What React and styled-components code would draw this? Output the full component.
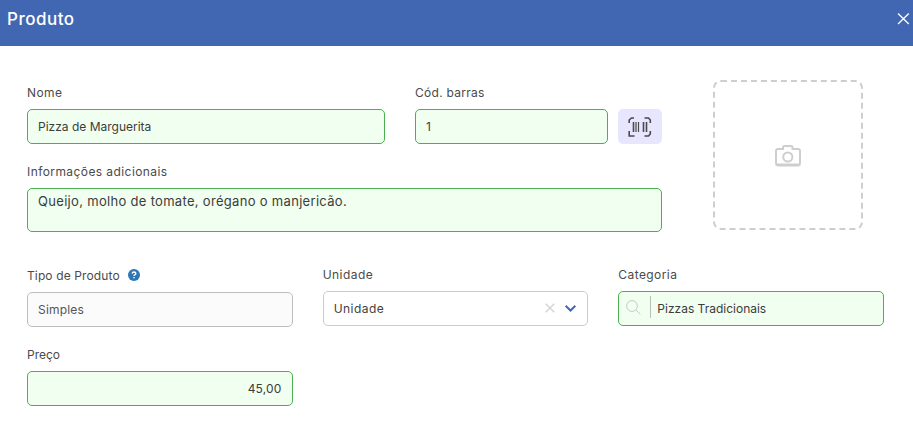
import styled, { createGlobalStyle, css } from "styled-components";

const GlobalStyle = createGlobalStyle`
  * {
    box-sizing: border-box;
  }

  body {
    margin: 0;
    color: #414141;
    background-color: #fff;
    font-family: "Inter", "Liberation Sans", sans-serif;
    font-size: 12px;
  }
`;

const Header = styled.header`
  height: 46px;
  padding: 0 3px 9px 7px;
  display: flex;
  align-items: center;
  justify-content: space-between;
  color: #fff;
  background-color: #4267b2;
`;

const Title = styled.h1`
  margin: 0;
  font-size: 17px;
  font-weight: 500;
  line-height: 24px;
  letter-spacing: 0.5px;
`;

const CloseButton = styled.button`
  width: 13px;
  height: 13px;
  padding: 0;
  display: flex;
  border: 0;
  color: #fff;
  background: none;
`;

const Form = styled.form`
  padding: 34px 29px 0 27px;
`;

const Top = styled.div`
  display: flex;
  gap: 51px;
`;

const MainFields = styled.div`
  width: 635px;
  padding-top: 3px;
`;

const NameRow = styled.div`
  display: grid;
  grid-template-columns: 358px 193px 44px;
  align-items: end;
  margin-bottom: 18px;
`;

const Field = styled.div`
  padding-top: ${(props) => props.$offset || 0}px;
`;

const BarcodeField = styled(Field)`
  margin-left: 30px;
  margin-right: -30px;
`;

const Label = styled.label`
  height: 18px;
  margin-bottom: 8px;
  display: flex;
  align-items: center;
  gap: 8px;
  color: #4a4a4a;
  white-space: nowrap;
  letter-spacing: ${(props) => props.$spacing || 0}px;
`;

const control = css`
  width: 100%;
  display: block;
  border: 1px solid #4caf50;
  border-radius: 5px;
  outline: 0;
  color: #3c3c3c;
  background-color: #f0fff0;
  font-family: inherit;
  letter-spacing: ${(props) => props.$spacing || 0}px;
`;

const Input = styled.input`
  ${control}
  height: 35px;
  padding: 0 10px 1px;
  font-size: 12px;
  text-align: ${(props) => props.$align || "left"};

  &:disabled {
    color: #555;
    border-color: #bdbdbd;
    background-color: #fbfbfb;
  }
`;

const TextArea = styled.textarea`
  ${control}
  height: 44px;
  padding: 2px 10px;
  font-size: 13px;
  line-height: 20px;
  resize: none;
  overflow: hidden;
`;

const BarcodeButton = styled.button`
  width: 44px;
  height: 35px;
  margin-left: 40px;
  padding: 0;
  display: flex;
  align-items: center;
  justify-content: center;
  border: 0;
  border-radius: 5px;
  color: #4a4a4a;
  background-color: #e6e6ff;
`;

const Photo = styled.div`
  width: 150px;
  height: 150px;
  padding-top: 2px;
  display: flex;
  align-items: center;
  justify-content: center;
  border: 2px dashed #cecece;
  border-radius: 8px;
  color: #cecece;
`;

const Details = styled.div`
  margin-top: 33px;
  display: grid;
  grid-template-columns: repeat(3, 1fr);
  column-gap: 30px;
  row-gap: 18px;
`;

const Select = styled.div`
  height: 35px;
  padding: 0 11px 1px 10px;
  display: flex;
  align-items: center;
  border: 1px solid #ccc;
  border-radius: 5px;
  letter-spacing: ${(props) => props.$spacing || 0}px;
`;

const SelectValue = styled.span`
  flex: 1;
`;

const SelectIcons = styled.div`
  display: flex;
  align-items: center;
  gap: 10px;
`;

const SearchBox = styled.div`
  ${control}
  height: 35px;
  padding-left: 7px;
  display: flex;
  align-items: center;
`;

const SearchDivider = styled.span`
  width: 1px;
  height: 22px;
  margin: 0 6px 3px 9px;
  background-color: #bdbdbd;
`;

const CloseIcon = () => (
  <svg width="13" height="13" viewBox="0 0 13 13" stroke="currentColor" strokeWidth="1.3">
    <path d="M1 1.5 11.8 12M11.8 1.5 1 12" />
  </svg>
);

const BarcodeIcon = () => (
  <svg width="24" height="22" viewBox="0 0 24 22" fill="none" stroke="currentColor">
    <path
      d="M6 2H3.5L1.2 4V7M16.5 2H20.5L22.3 4V7M1.2 15V20H6.5M16.5 20H20.5L22.3 18V15"
      strokeWidth="1.6"
    />
    <path d="M5.5 6V16M15.5 6V16M18.5 6V16" strokeWidth="1.6" />
    <path d="M8 6V16M10.5 6V16" strokeWidth="1.2" />
  </svg>
);

const CameraIcon = () => (
  <svg width="26" height="22" viewBox="0 0 26 22" fill="none" stroke="currentColor" strokeWidth="2">
    <path d="M3 4H8V2.5Q8 1 9.5 1H16Q17.5 1 17.5 2.5V4H23Q25 4 25 6V18Q25 20.5 22.5 20.5H3.5Q1 20.5 1 18V6Q1 4 3 4Z" />
    <path d="M2 19.5H24" />
    <circle cx="12.8" cy="12" r="4.6" />
  </svg>
);

const HelpIcon = () => (
  <svg width="12" height="12" viewBox="0 0 12 12" fill="none">
    <circle cx="6" cy="6" r="6" fill="#2e75b6" />
    <path d="M4.2 4.6Q4.3 3 6 3 7.8 3 7.8 4.4 7.8 5.3 6.7 5.8 6 6.1 6 7" stroke="#fff" strokeWidth="1.4" />
    <path d="M5.3 8H6.7V9.3H5.3Z" fill="#fff" />
  </svg>
);

const ClearIcon = () => (
  <svg width="10" height="10" viewBox="0 0 10 10" stroke="#d2d2d2" strokeWidth="1.3">
    <path d="M.7.7 9.3 9.3M9.3.7.7 9.3" />
  </svg>
);

const ChevronIcon = () => (
  <svg width="11" height="7" viewBox="0 0 11 7" fill="none" stroke="#4267b2" strokeWidth="2">
    <path d="M.6.8 5.5 5.5 10.4.8" />
  </svg>
);

const SearchIcon = () => (
  <svg width="15" height="17" viewBox="0 0 15 17" fill="none" stroke="#c8c8c8">
    <circle cx="6" cy="6" r="5.4" />
    <path d="M10 10 14.4 14.4" />
  </svg>
);

const App = () => {
  return (
    <>
      <GlobalStyle />
      <Header>
        <Title>Produto</Title>
        <CloseButton type="button" aria-label="Fechar">
          <CloseIcon />
        </CloseButton>
      </Header>

      <Form>
        <Top>
          <MainFields>
            <NameRow>
              <Field>
                <Label htmlFor="nome" $spacing={0.4}>Nome</Label>
                <Input id="nome" defaultValue="Pizza de Marguerita" />
              </Field>
              <BarcodeField>
                <Label htmlFor="codigo" $spacing={0.28}>Cód. barras</Label>
                <Input id="codigo" defaultValue="1" />
              </BarcodeField>
              <BarcodeButton type="button" aria-label="Ler código">
                <BarcodeIcon />
              </BarcodeButton>
            </NameRow>

            <Field>
              <Label htmlFor="info" $spacing={0.42}>Informações adicionais</Label>
              <TextArea
                id="info"
                spellCheck="false"
                defaultValue="Queijo, molho de tomate, orégano o manjericão."
                $spacing={0.31}
              />
            </Field>
          </MainFields>

          <Photo>
            <CameraIcon />
          </Photo>
        </Top>

        <Details>
          <Field $offset={1}>
            <Label htmlFor="tipo" $spacing={0.12}>
              Tipo de Produto <HelpIcon />
            </Label>
            <Input id="tipo" defaultValue="Simples" disabled $spacing={0.2} />
          </Field>
          <Field>
            <Label $spacing={0.45}>Unidade</Label>
            <Select $spacing={0.45}>
              <SelectValue>Unidade</SelectValue>
              <SelectIcons>
                <ClearIcon />
                <ChevronIcon />
              </SelectIcons>
            </Select>
          </Field>
          <Field>
            <Label $spacing={0.42}>Categoria</Label>
            <SearchBox>
              <SearchIcon />
              <SearchDivider />
              <span>Pizzas Tradicionais</span>
            </SearchBox>
          </Field>
          <Field>
            <Label htmlFor="preco">Preço</Label>
            <Input id="preco" defaultValue="45,00" $align="right" $spacing={0.2} />
          </Field>
        </Details>
      </Form>
    </>
  );
};

export default App;
